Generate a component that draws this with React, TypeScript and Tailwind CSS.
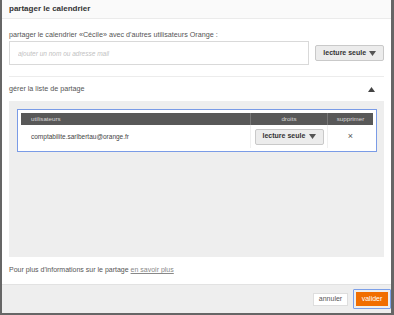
import { useState } from "react";

function Caret({ up = false }: { up?: boolean }) {
    return (
        <svg width="7" height="5" viewBox="0 0 7 5" className="shrink-0">
            {up ? <polygon points="0,5 7,5 3.5,0" fill="#444" /> : <polygon points="0,0 7,0 3.5,5" fill="#555" />}
        </svg>
    );
}

function RightsButton() {
    return (
        <button type="button" className="flex items-center justify-between h-[16px] w-[69px] px-[7px] bg-[#ececec] border border-[#c9c9c9] rounded-[2px] text-[7px] font-bold text-[#333] whitespace-nowrap">
            <span>lecture seule</span>
            <Caret />
        </button>
    );
}

export default function App() {
    const [open] = useState(true);

    return (
        <div className="w-[394px] h-[315px] bg-[#666]">
            <div className="flex flex-col h-[313px] ml-[2px] mr-[3px] bg-white font-['Liberation_Sans',Arial,sans-serif] text-[#444]">
                <div className="h-[19px] shrink-0 flex items-center px-[7px] border-b border-[#ebebeb] bg-[#fafafa]">
                    <span className="text-[8px] font-bold text-[#333]">partager le calendrier</span>
                </div>

                <div className="px-[7px]">
                    <div className="pt-[11px] text-[7.2px] leading-[9px] text-[#555] whitespace-nowrap">
                        partager le calendrier «Cécile» avec d'autres utilisateurs Orange :
                    </div>
                    <div className="flex items-center gap-[6px] mt-[2px] h-[24px]">
                        <input
                            type="text"
                            placeholder="ajouter un nom ou adresse mail"
                            className="h-[24px] w-[302px] px-[8px] border border-[#d9d9d9] text-[6.5px] italic placeholder:text-[#c2c2c2] focus:outline-none"
                        />
                        <RightsButton />
                    </div>
                    <div className="mt-[11px] border-t border-[#ececec]" />

                    <div className="h-[24px] flex items-center justify-between pr-[9px]">
                        <span className="text-[7.2px] text-[#555]">gérer la liste de partage</span>
                        <Caret up={open} />
                    </div>

                    <div className="h-[156px] bg-[#eeeeee] pt-[8px] pl-[8px] pr-[7px]">
                        <div className="border border-[#7a9be6] bg-white p-[3px]">
                            <div className="flex h-[12px] bg-[#585858] text-[6.2px] text-[#d8d8d8]">
                                <div className="flex-1 flex items-center pl-[10px]">utilisateurs</div>
                                <div className="w-[77px] flex items-center justify-center border-l border-[#777]">droits</div>
                                <div className="w-[46px] flex items-center justify-center border-l border-[#777]">supprimer</div>
                            </div>
                            <div className="flex h-[23px] text-[6.5px] text-[#444]">
                                <div className="flex-1 flex items-center pl-[10px]">comptabilite.sarlbertau@orange.fr</div>
                                <div className="w-[77px] flex items-center justify-center border-l border-[#f0f0f0]">
                                    <RightsButton />
                                </div>
                                <div className="w-[46px] flex items-center justify-center border-l border-[#f0f0f0] text-[9px] text-[#555]">×</div>
                            </div>
                        </div>
                    </div>

                    <div className="h-[27px] flex items-center text-[7px] text-[#555] whitespace-nowrap">
                        <span>Pour plus d'informations sur le partage&nbsp;</span>
                        <a href="#" className="underline text-[#888]">en savoir plus</a>
                    </div>
                </div>

                <div className="flex-1 bg-[#eeeeee] border-t border-[#e2e2e2] flex items-center justify-end gap-[5px]">
                    <button type="button" className="h-[13px] w-[35px] bg-white border border-[#dedede] text-[7px] text-[#555]">annuler</button>
                    <div className="flex border border-[#7c9fe8] p-[2px] rounded-[1px]">
                        <button type="button" className="h-[14px] w-[32px] bg-[#f16e00] text-[7px] text-white">valider</button>
                    </div>
                </div>
            </div>
        </div>
    );
}
